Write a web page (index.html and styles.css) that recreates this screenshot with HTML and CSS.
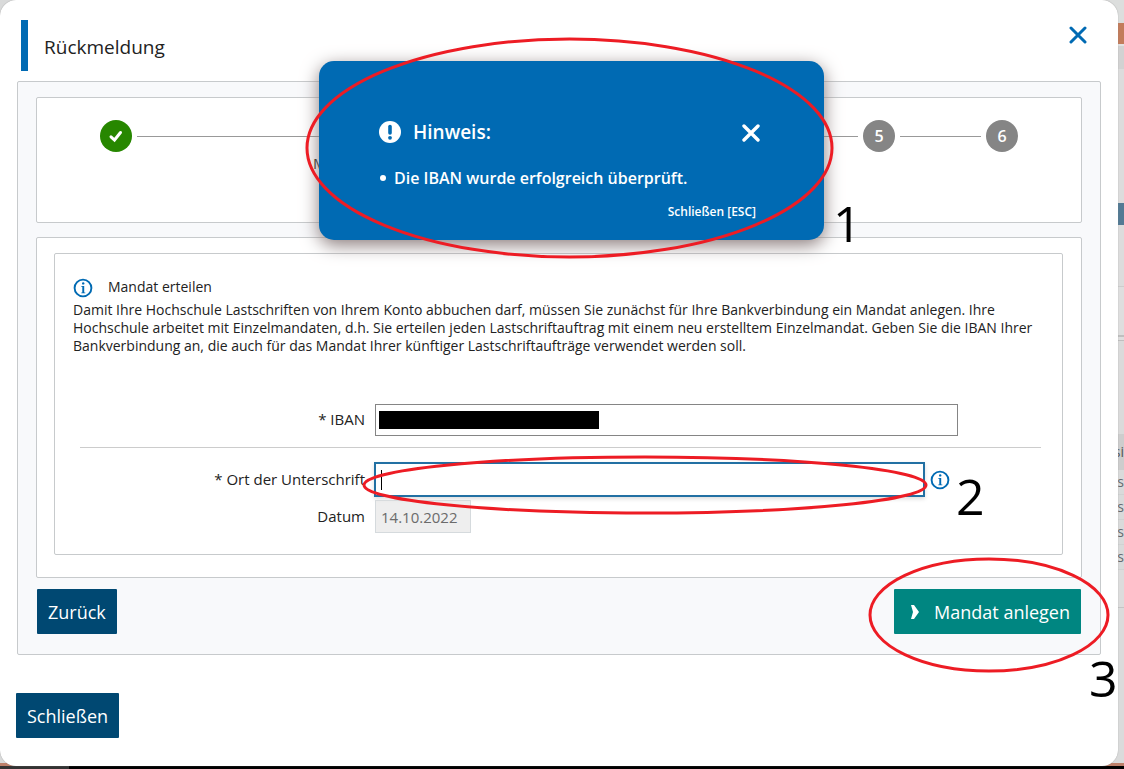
FILE: index.html
```html
<!DOCTYPE html>
<html lang="de">
<head>
<meta charset="utf-8">
<title>Rückmeldung</title>
<link rel="stylesheet" href="styles.css">
</head>
<body>
<div class="page">
  <div class="backdrop">
    <div class="strip strip-head"></div>
    <div class="strip strip-orange"></div>
    <div class="strip strip-grey"></div>
    <div class="strip strip-body"></div>
    <div class="strip strip-blue"></div>
    <div class="strip strip-row"></div>
    <div class="strip strip-block"></div>
    <div class="strip strip-title">si</div>
    <div class="strip strip-item">s</div>
    <div class="strip strip-item">s</div>
    <div class="strip strip-item">s</div>
    <div class="strip strip-item">s</div>
    <div class="strip strip-end"></div>
    <div class="strip strip-last"></div>
    <div class="strip-floor"></div>
  </div>
  <main class="modal">
    <header class="modal-head">
      <h1 class="title">Rückmeldung</h1>
      <button class="close" type="button" aria-label="Schließen">
        <svg width="18" height="18" viewBox="0 0 18 18"><path d="M2 2L16 16M16 2L2 16" stroke="currentColor" stroke-width="3" stroke-linecap="round"/></svg>
      </button>
    </header>
    <section class="panel">
      <div class="box stepper">
        <div class="steps">
          <span class="step step-done"><svg width="16" height="16" viewBox="0 0 16 16"><path d="M3 8.800L6.500 12L12.500 4.500" fill="none" stroke="#fff" stroke-width="3" stroke-linecap="round"/></svg></span>
          <span class="line line-wide"></span>
          <span class="step">5</span>
          <span class="line line-short"></span>
          <span class="step">6</span>
        </div>
        <div class="step-label">M</div>
      </div>
      <div class="box content">
        <form class="mandate">
          <div class="info-head">
            <svg class="info" width="20" height="20" viewBox="0 0 20 20"><circle cx="10" cy="10" r="8.400" fill="none" stroke="currentColor" stroke-width="1.900"/><path d="M8.300 8H11.200V14.500H12.300V15.300H8.300V14.500H9.300V8.800H8.300Z" fill="currentColor"/><circle cx="10.200" cy="5.400" r="1.200" fill="currentColor"/></svg>
            <h2 class="subtitle">Mandat erteilen</h2>
          </div>
          <p class="text">Damit Ihre Hochschule Lastschriften von Ihrem Konto abbuchen darf, müssen Sie zunächst für Ihre Bankverbindung ein Mandat anlegen. Ihre Hochschule arbeitet mit Einzelmandaten, d.h. Sie erteilen jeden Lastschriftauftrag mit einem neu erstelltem Einzelmandat. Geben Sie die IBAN Ihrer Bankverbindung an, die auch für das Mandat Ihrer künftiger Lastschriftaufträge verwendet werden soll.</p>
          <div class="row row-iban">
            <label class="label" for="iban">* IBAN</label>
            <div class="field field-iban">
              <input class="input" id="iban" type="text">
              <span class="redaction"></span>
            </div>
          </div>
          <div class="row row-ort">
            <label class="label" for="ort">* Ort der Unterschrift</label>
            <div class="field field-ort">
              <input class="input input-active" id="ort" type="text">
              <span class="caret"></span>
            </div>
            <svg class="info" width="20" height="20" viewBox="0 0 20 20"><circle cx="10" cy="10" r="8.400" fill="none" stroke="currentColor" stroke-width="1.900"/><path d="M8.300 8H11.200V14.500H12.300V15.300H8.300V14.500H9.300V8.800H8.300Z" fill="currentColor"/><circle cx="10.200" cy="5.400" r="1.200" fill="currentColor"/></svg>
          </div>
          <div class="row row-datum">
            <label class="label" for="datum">Datum</label>
            <input class="input input-date" id="datum" type="text" value="14.10.2022" disabled>
          </div>
        </form>
      </div>
      <div class="actions">
        <button class="button" type="button">Zurück</button>
        <button class="button button-primary" type="button"><svg width="10" height="14" viewBox="0 0 10 14"><path d="M1 0H4L9 7L4 14H1L3 7Z" fill="#fff"/></svg>Mandat anlegen</button>
      </div>
    </section>
    <footer class="foot"><button class="button" type="button">Schließen</button></footer>
  </main>

  <div class="toast" role="alert">
    <div class="toast-head">
      <svg width="22" height="22" viewBox="0 0 22 22"><circle cx="11" cy="11" r="11" fill="#fff"/><path d="M11 5.500V12" stroke="#006ab3" stroke-width="3.600" stroke-linecap="round"/><circle cx="11" cy="16.800" r="1.900" fill="#006ab3"/></svg>
      <h2 class="toast-title">Hinweis:</h2>
      <button class="toast-x" type="button" aria-label="Schließen"><svg width="18" height="18" viewBox="0 0 18 18"><path d="M2 2L16 16M16 2L2 16" stroke="currentColor" stroke-width="3.400" stroke-linecap="round"/></svg></button>
    </div>
    <ul class="toast-list"><li class="toast-item">Die IBAN wurde erfolgreich überprüft.</li></ul>
    <button class="toast-close" type="button">Schließen [ESC]</button>
  </div>

  <svg class="marks" width="1124" height="769" viewBox="0 0 1124 769">
    <ellipse cx="569.500" cy="148" rx="262.500" ry="109"/>
    <ellipse cx="645" cy="485" rx="281" ry="28"/>
    <ellipse cx="989" cy="615" rx="119" ry="56"/>
  </svg>
  <span class="number number-1">1</span>
  <span class="number number-2">2</span>
  <span class="number number-3">3</span>
</div>
</body>
</html>
```
FILE: styles.css
```css
* { box-sizing: border-box; }
body { margin: 0; font-family: "Open Sans", sans-serif; font-size: 15px; color: #222; }
h1, h2, p, ul { margin: 0; padding: 0; font-weight: 400; }
button, input { font: inherit; }
button { border: 0; margin: 0; cursor: pointer; }
svg { display: block; flex: none; }

.page { position: relative; display: grid; min-height: 100vh; background: #d9dada; overflow: hidden; }
.backdrop, .modal { grid-area: 1 / 1; }

.backdrop { display: flex; flex-direction: column; align-items: flex-end; }
.strip { display: flex; justify-content: flex-end; width: 14px; height: 25px; background: #dcdcdc; color: #666b70; font-size: 14px; line-height: 24px; }
.strip-head { height: 23px; background: #dcdedd; }
.strip-orange { height: 21px; background: #c27c5b; }
.strip-grey { height: 25px; background: #d2d2d2; border-top: 2px solid #e2e2e2; }
.strip-body { height: 134px; }
.strip-blue { height: 22px; background: #537a94; }
.strip-row { height: 62px; border-bottom: 1px solid #cccccc; }
.strip-block { height: 147px; background: linear-gradient(#dedede 48px, #bfbfbf 48px 50px, #dedede 50px 53px, #bfbfbf 53px 54px, #dadada 54px); }
.strip-title { height: 36px; background: #cdcdcd; color: #555; line-height: 36px; }
.strip-item { border-bottom: 1px solid #d0d2d2; background: #d9dada; }
.strip-end { height: 38px; border-bottom: 1px solid #c4c4c4; }
.strip-last { flex: 1; background: #dadbdb; }
.strip-floor { width: 100%; height: 6px; background: linear-gradient(90deg, #333 69px, #000 69px); border-top: 3px solid #bd806a; }

.modal { position: relative; margin: 0 6px 3px 0; padding: 20px 17px 27px; background: #fff; border-radius: 16px; box-shadow: 0 0 1px #888; }
.modal-head { display: flex; justify-content: space-between; height: 51px; margin: 0 14px 10px 4px; border-left: 7px solid #006ab3; }
.title { padding-left: 16px; font-size: 19px; line-height: 54px; }
.close { align-self: flex-start; padding: 6px 0; background: none; color: #006ab3; }

.panel { padding: 15px 18px 20px; border: 1px solid #c7cacc; border-radius: 2px; background: #f8f9fb; }
.box { border: 1px solid #c7cacc; border-radius: 2px; background: #fff; }
.stepper { height: 126px; margin-bottom: 14px; padding: 22px 63px 0; }
.steps { display: flex; align-items: center; gap: 5px; }
.step { display: flex; align-items: center; justify-content: center; flex: none; width: 32px; height: 32px; border-radius: 50%; background: #858585; color: #fff; font-size: 16px; font-weight: 600; }
.step-done { background: #278700; }
.line { height: 1px; background: #999; }
.line-wide { flex: 1; }
.line-short { width: 81px; }
.step-label { padding: 1px 213px; }

.content { padding: 15px 18px 22px 17px; }
.mandate { padding: 22px 18px 21px; border: 1px solid #c7cacc; border-radius: 2px; }
.info { color: #006ab3; }
.info-head { display: flex; align-items: flex-end; gap: 15px; height: 22px; }
.subtitle { font-size: 14px; line-height: 22px; }
.text { margin: 3px 0 49px; font-size: 14px; line-height: 18px; }
.row { display: flex; align-items: center; gap: 10px; margin: 0 3px 0 7px; }
.row-iban { padding-bottom: 11px; border-bottom: 1px solid #ccc; }
.row-ort { padding-top: 14px; gap: 5px; }
.row-ort .label { margin-right: 4px; }
.row-datum { padding-top: 3px; }
.label { flex: none; width: 285px; line-height: 22px; padding-bottom: 2px; text-align: right; }
.field { position: relative; flex: none; }
.field-ort { width: 551px; }
.field-iban { width: 583px; }
.input { display: block; width: 100%; height: 32px; padding: 0 6px; border: 1px solid #858585; background: #fff; }
.input-active { height: 35px; border: 2px solid #2270a3; box-shadow: 0 2px 4px #ddd; outline: 0; }
.input-date { width: 96px; height: 33px; padding: 0 5px; border-color: #d5dadd; background: #eee; color: #6b6b6b; }
.redaction { position: absolute; left: 4px; top: 7px; width: 220px; height: 18px; background: #000; }
.caret { position: absolute; left: 7px; top: 8px; width: 1px; height: 20px; background: #000; }

.actions { display: flex; justify-content: space-between; padding: 11px 1px 0; }
.button { display: flex; align-items: center; height: 45px; padding: 0 11px; border-radius: 1px; background: #004872; color: #fff; font-size: 18px; }
.button-primary { gap: 14px; padding-left: 16px; background: #008681; }
.foot { display: flex; margin: 38px -1px 0; }

.toast { position: absolute; left: 319px; top: 61px; width: 505px; height: 179px; padding: 58px 64px 0 60px; border-radius: 15px; background: #006ab3; color: #fff; box-shadow: 0 5px 18px #8a7c7c; }
.toast-head { display: flex; align-items: center; gap: 12px; height: 26px; }
.toast-title { flex: 1; font-size: 19px; font-weight: 600; }
.toast-x { padding: 1px 0 0; background: none; color: #fff; }
.toast-list { padding-top: 21px; font-size: 16px; font-weight: 600; line-height: 24px; list-style: none; }
.toast-item { display: flex; align-items: center; gap: 8px; padding-left: 1px; }
.toast-item::before { content: ""; width: 6px; height: 6px; border-radius: 50%; background: #fff; }
.toast-close { display: block; margin: 12px 4px 0 auto; padding: 0; background: none; color: #fff; font-size: 12px; font-weight: 600; line-height: 20px; }

.marks { position: absolute; left: 0; top: 0; fill: none; stroke: #ed1c24; stroke-width: 3; pointer-events: none; }
.number { position: absolute; color: #000; font-size: 50px; line-height: 50px; }
.number-1 { left: 833px; top: 198px; }
.number-2 { left: 956px; top: 471px; }
.number-3 { left: 1089px; top: 653px; }
```
